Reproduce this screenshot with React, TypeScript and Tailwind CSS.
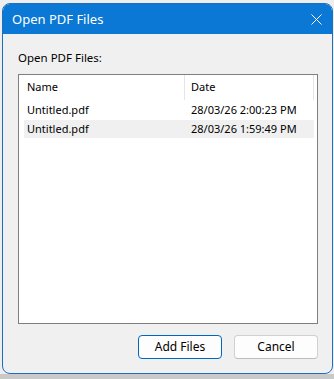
import React from "react";

export default function App() {
  const font = { fontFamily: '"Segoe UI", "Noto Sans", "Liberation Sans", sans-serif' };
  return (
    <div className="w-[334px] h-[379px] bg-[#eeeeee] flex flex-col overflow-hidden" style={font}>
      <div className="flex-1 flex flex-col pt-[3px] pl-[2px] pr-[1px]">
        <div className="flex-1 flex flex-col border border-[#1a6fc0] rounded-[8px] overflow-hidden bg-[#f0f0f0]">
          <div className="h-[30px] bg-[#0a78d4] flex items-center justify-between pl-[9px] pr-[9px] shrink-0">
            <span className="text-white text-[13px] leading-none mt-[1px]">Open PDF Files</span>
            <svg width="11" height="11" viewBox="0 0 11 11" className="mr-[1px]">
              <path d="M0.5 0.5 L10.5 10.5 M10.5 0.5 L0.5 10.5" stroke="#ffffff" strokeWidth="1" />
            </svg>
          </div>
          <div className="flex-1 flex flex-col pl-[15px] pr-[14px] pt-[16px] pb-[14px]">
            <div className="text-[11.5px] leading-[16px] text-black h-[24px]">Open PDF Files:</div>
            <div className="h-[250px] border border-[#7f7f7f] bg-white flex flex-col">
              <div className="h-[25px] flex text-[11px] text-black shrink-0">
                <div className="w-[166px] border-r border-[#e5e5e5] flex items-center pl-[8px]">Name</div>
                <div className="w-[129px] border-r border-[#e5e5e5] flex items-center pl-[6px]">Date</div>
              </div>
              <div className="flex flex-col pl-[5px] pr-[3px] pt-[1px] text-[11px] text-black">
                <div className="h-[19px] flex items-center">
                  <div className="w-[161px] pl-[3px]">Untitled.pdf</div>
                  <div className="pl-[6px]">28/03/26 2:00:23 PM</div>
                </div>
                <div className="h-[18px] flex items-center bg-[#f0f0f0]">
                  <div className="w-[161px] pl-[3px]">Untitled.pdf</div>
                  <div className="pl-[6px]">28/03/26 1:59:49 PM</div>
                </div>
              </div>
            </div>
            <div className="flex justify-end gap-[12px] mt-[11px]">
              <button className="w-[84px] h-[24px] rounded-[4px] border border-[#0067c0] bg-[#fdfdfd] text-[12px] text-black flex items-center justify-center">
                Add Files
              </button>
              <button className="w-[84px] h-[24px] rounded-[4px] border border-[#d0d0d0] border-b-[#bcbcbc] bg-[#fdfdfd] text-[12px] text-black flex items-center justify-center">
                Cancel
              </button>
            </div>
          </div>
        </div>
      </div>
      <div className="h-[5px] bg-[#c9c9c9] shrink-0" />
    </div>
  );
}
